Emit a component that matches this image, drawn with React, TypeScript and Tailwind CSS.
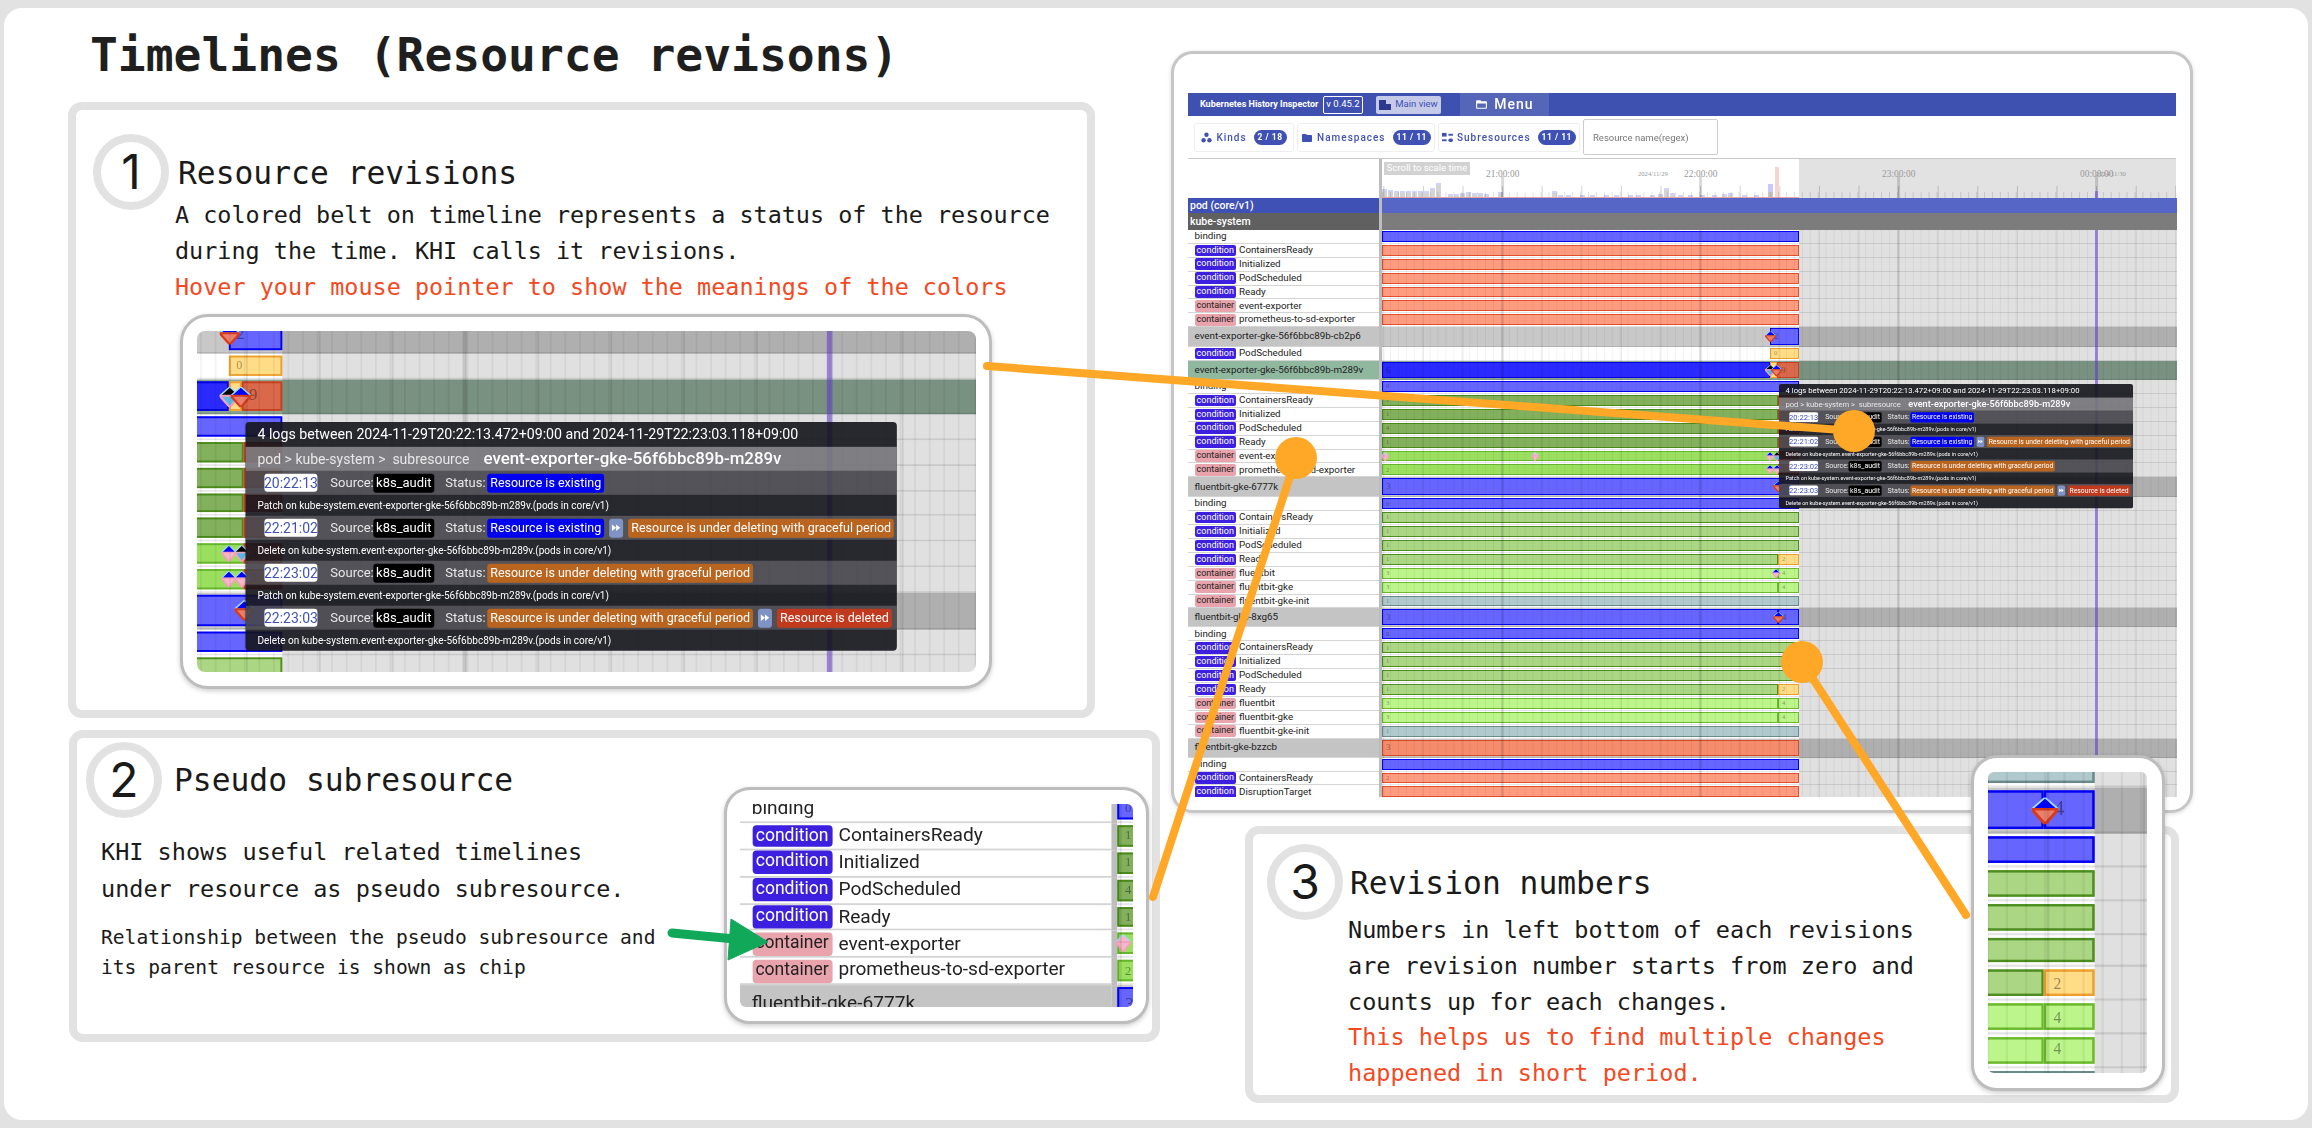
type BarColor = 'blue' | 'deep' | 'salmon' | 'salmonDark' | 'olive' | 'green' | 'lime' | 'pale' | 'teal' | 'yellow' | 'rust';

interface Bar {
  l: number;
  w: number;
  c: BarColor;
  n?: string;
}

interface Mark {
  x: number;
  tip: string;
  body: string;
}

interface Row {
  type: 'res' | 'sub' | 'selected';
  chip?: 'condition' | 'container';
  label: string;
  bars: Bar[];
  marks?: Mark[];
}

const barColors: Record<BarColor, string> = {
  blue: 'bg-[#6666ff] border-[#0000f5]',
  deep: 'bg-[#2a2aff] border-[#0000dd]',
  salmon: 'bg-[#ff9c80] border-[#e0502e]',
  salmonDark: 'bg-[#f58c6c] border-[#d8482a]',
  olive: 'bg-[#83b05c] border-[#4a8a1c]',
  green: 'bg-[#abd684] border-[#4e8e20]',
  lime: 'bg-[#9ae05e] border-[#66b52e]',
  pale: 'bg-[#bcf58a] border-[#6cb82e]',
  teal: 'bg-[#b0c9cc] border-[#6a8a8a]',
  yellow: 'bg-[#ffdc85] border-[#eea02e]',
  rust: 'bg-[#d9694a] border-[#c84020]',
};

const END = 417;
const SPLIT = 396;

const full = (c: BarColor, n: string): Bar[] => [{ l: 0, w: END, c, n }];
const split = (a: BarColor, b: BarColor, n1: string, n2: string): Bar[] => [
  { l: 0, w: SPLIT, c: a, n: n1 },
  { l: SPLIT, w: END - SPLIT, c: b, n: n2 },
];

const red: Mark = { x: 388, tip: '#0000ff', body: '#e8806c' };
const pink: Mark = { x: 3, tip: '#f4b8c8', body: '#f4b8c8' };
const pinkBlue = (x: number): Mark => ({ x, tip: '#0000ff', body: '#f4b8c8' });
const skyBlack = (x: number): Mark => ({ x, tip: '#000000', body: '#58b8e8' });

const sub = (chip: 'condition' | 'container', label: string, bars: Bar[], marks?: Mark[]): Row => ({
  type: 'sub',
  chip,
  label,
  bars,
  marks,
});

const rows: Row[] = [
  { type: 'sub', label: 'binding', bars: full('blue', '') },
  sub('condition', 'ContainersReady', full('salmon', '')),
  sub('condition', 'Initialized', full('salmon', '')),
  sub('condition', 'PodScheduled', full('salmon', '')),
  sub('condition', 'Ready', full('salmon', '')),
  sub('container', 'event-exporter', full('salmon', '')),
  sub('container', 'prometheus-to-sd-exporter', full('salmon', '')),
  { type: 'res', label: 'event-exporter-gke-56f6bbc89b-cb2p6', bars: [{ l: 388, w: 29, c: 'blue', n: '2' }], marks: [red] },
  sub('condition', 'PodScheduled', [{ l: 388, w: 29, c: 'yellow', n: '0' }]),
  {
    type: 'selected',
    label: 'event-exporter-gke-56f6bbc89b-m289v',
    bars: [
      { l: 0, w: 388, c: 'deep', n: '6' },
      { l: 388, w: 7, c: 'yellow' },
      { l: 395, w: 22, c: 'rust', n: '9' },
    ],
    marks: [skyBlack(388), { x: 394, tip: '#0000ff', body: '#e8806c' }],
  },
  { type: 'sub', label: 'binding', bars: full('blue', '0') },
  sub('condition', 'ContainersReady', split('olive', 'rust', '1', '')),
  sub('condition', 'Initialized', split('olive', 'rust', '1', '')),
  sub('condition', 'PodScheduled', split('olive', 'rust', '4', '')),
  sub('condition', 'Ready', split('olive', 'rust', '1', '')),
  sub('container', 'event-exporter', split('lime', 'rust', '', '4'), [pink, { ...pink, x: 153 }, pinkBlue(388), skyBlack(395)]),
  sub('container', 'prometheus-to-sd-exporter', split('lime', 'rust', '2', '5'), [pinkBlue(388), pinkBlue(395)]),
  { type: 'res', label: 'fluentbit-gke-6777k', bars: full('blue', '3'), marks: [{ x: 396, tip: '#0000ff', body: '#e8806c' }] },
  { type: 'sub', label: 'binding', bars: full('blue', '0') },
  sub('condition', 'ContainersReady', full('green', '1')),
  sub('condition', 'Initialized', full('green', '1')),
  sub('condition', 'PodScheduled', full('green', '1')),
  sub('condition', 'Ready', split('green', 'yellow', '1', '2')),
  sub('container', 'fluentbit', split('pale', 'pale', '3', '4'), [pinkBlue(394)]),
  sub('container', 'fluentbit-gke', split('pale', 'pale', '3', '4')),
  sub('container', 'fluentbit-gke-init', full('teal', '1')),
  { type: 'res', label: 'fluentbit-gke-8xg65', bars: split('blue', 'blue', '3', '4'), marks: [{ x: 396, tip: '#0000ff', body: '#e8806c' }] },
  { type: 'sub', label: 'binding', bars: full('blue', '0') },
  sub('condition', 'ContainersReady', full('green', '1')),
  sub('condition', 'Initialized', full('green', '1')),
  sub('condition', 'PodScheduled', full('green', '1')),
  sub('condition', 'Ready', split('green', 'yellow', '1', '2')),
  sub('container', 'fluentbit', split('pale', 'pale', '3', '4')),
  sub('container', 'fluentbit-gke', split('pale', 'pale', '3', '4')),
  sub('container', 'fluentbit-gke-init', full('teal', '1')),
  { type: 'res', label: 'fluentbit-gke-bzzcb', bars: full('salmonDark', '3') },
  { type: 'sub', label: 'binding', bars: full('blue', '') },
  sub('condition', 'ContainersReady', full('salmon', '2')),
  sub('condition', 'DisruptionTarget', full('salmon', '')),
];

function Diamond({ mark, big }: { mark: Mark; big: boolean }) {
  const size = big ? 'top-[4px] h-[11px] w-[11px]' : 'top-[2px] h-[9px] w-[8px]';
  return (
    <svg viewBox="0 0 12 16" preserveAspectRatio="none" className={`absolute z-[5] ${size}`} style={{ left: mark.x - (big ? 5.5 : 4) }}>
      <polygon points="6,0 12,7 0,7" fill={mark.tip} stroke="#9fdcff" strokeWidth="1" />
      <polygon points="0,7 12,7 6,16" fill={mark.body} stroke={mark.body === '#e8806c' ? '#d83a1c' : '#f4a0b8'} strokeWidth="1.5" />
    </svg>
  );
}

function TimelineRow({ row, labels }: { row: Row; labels: boolean }) {
  const isRes = row.type !== 'sub';
  const short = row.label.endsWith('8xg65') || row.label.endsWith('bzzcb') || row.label.endsWith('m289v');
  const leftBg = row.type === 'res' ? 'bg-[#c4c4c4]' : row.type === 'selected' ? 'bg-[#8fb89f]' : 'bg-white';
  const trackBg = row.type === 'res' ? 'bg-[#c8c8c8]' : row.type === 'selected' ? 'bg-[#8aa593]' : 'bg-white';
  return (
    <div className={`flex ${isRes ? (short ? 'h-[19px]' : 'h-[20px]') : 'h-[13.9px]'}`}>
      <div className={`w-[191px] shrink-0 flex items-center gap-[3px] pl-[6.5px] border-b border-[#d4d4d4] text-[9.8px] text-[#222] whitespace-nowrap ${leftBg}`}>
        {labels && row.chip === 'condition' && (
          <span className="w-[41.5px] h-[11.5px] flex items-center justify-center rounded-[2px] bg-[#3d1fe0] text-white text-[9px]">condition</span>
        )}
        {labels && row.chip === 'container' && (
          <span className="w-[41.5px] h-[11.5px] flex items-center justify-center rounded-[2px] bg-[#e8a3ac] text-[#222] text-[9px]">container</span>
        )}
        {labels && <span>{row.label}</span>}
      </div>
      <div className="w-[3px] shrink-0 bg-[#bdbdbd]" />
      <div className={`relative flex-1 border-b border-black/10 ${trackBg}`}>
        {row.bars.map((b, i) => (
          <div
            key={i}
            className={`absolute top-[1px] bottom-[1px] border flex items-center pl-[3px] font-['Liberation_Serif',serif] leading-none text-black/40 ${isRes ? 'text-[9px]' : 'text-[6.5px]'} ${barColors[b.c]}`}
            style={{ left: b.l, width: b.w }}
          >
            {b.n}
          </div>
        ))}
        {row.marks?.map((m, i) => (
          <Diamond key={i} mark={m} big={isRes} />
        ))}
      </div>
    </div>
  );
}

// Grid lines over the whole track
function GridLines() {
  const minor = Array.from({ length: 100 }, (_, i) => 0.6 + i * 7.92);
  const medium = Array.from({ length: 21 }, (_, i) => 1.8 + i * 39.6);
  const major = [120.6, 318.6, 516.6, 714.6];
  return (
    <svg width="795" height="599" className="absolute left-[194px] top-0 z-10">
      {minor.map((x) => (
        <line key={x} x1={x} x2={x} y1="0" y2="599" stroke="#000" strokeOpacity="0.05" />
      ))}
      {medium.map((x) => (
        <line key={x} x1={x} x2={x} y1="0" y2="599" stroke="#000" strokeOpacity="0.09" />
      ))}
      {major.map((x) => (
        <line key={x} x1={x} x2={x} y1="0" y2="599" stroke="#000" strokeOpacity="0.07" strokeWidth="3" />
      ))}
    </svg>
  );
}

function ForwardIcon() {
  return (
    <span className="w-[14px] h-[19px] flex items-center justify-center rounded-[3px] bg-[#7f93c4]">
      <svg viewBox="0 0 12 12" className="w-[10px] h-[10px]">
        <polygon points="1,2 6,6 1,10" fill="#fff" />
        <polygon points="6,2 11,6 6,10" fill="#fff" />
      </svg>
    </span>
  );
}

function StatusChip({ color, text }: { color: 'blue' | 'orange' | 'red'; text: string }) {
  const cls = color === 'blue' ? 'bg-[#0000f0]' : color === 'orange' ? 'bg-[#b9651f]' : 'bg-[#c23a1e]';
  return <span className={`h-[19px] px-[3px] flex items-center rounded-[3px] text-white text-[12.5px] ${cls}`}>{text}</span>;
}

const logEntries = [
  { time: '20:22:13', msg: 'Patch on kube-system.event-exporter-gke-56f6bbc89b-m289v.(pods in core/v1)', from: 'blue' as const, to: undefined },
  { time: '22:21:02', msg: 'Delete on kube-system.event-exporter-gke-56f6bbc89b-m289v.(pods in core/v1)', from: 'blue' as const, to: 'orange' as const },
  { time: '22:23:02', msg: 'Patch on kube-system.event-exporter-gke-56f6bbc89b-m289v.(pods in core/v1)', from: 'orange' as const, to: undefined },
  { time: '22:23:03', msg: 'Delete on kube-system.event-exporter-gke-56f6bbc89b-m289v.(pods in core/v1)', from: 'orange' as const, to: 'red' as const },
];

const statusText = {
  blue: 'Resource is existing',
  orange: 'Resource is under deleting with graceful period',
  red: 'Resource is deleted',
};

function LogTooltip() {
  return (
    <div className="w-[652px] rounded-[4px] overflow-hidden bg-[#14141c]/90 text-[#e8e8e8] font-['Roboto',sans-serif]">
      <div className="h-[25px] flex items-center pl-[12px] text-[14.2px] text-white whitespace-nowrap">
        4 logs between 2024-11-29T20:22:13.472+09:00 and 2024-11-29T22:23:03.118+09:00
      </div>
      <div className="h-[24px] flex items-center pl-[12px] gap-[14px] bg-white/40 text-[14px] whitespace-nowrap">
        <span>pod &gt; kube-system &gt;&nbsp; subresource</span>
        <span className="text-[16.9px] font-medium text-white">event-exporter-gke-56f6bbc89b-m289v</span>
      </div>
      {logEntries.map((e) => (
        <div key={e.time}>
          <div className="h-[24px] flex items-center bg-white/20 text-[13px] whitespace-nowrap">
            <span className="ml-[19px] w-[53px] h-[18px] flex items-center justify-center rounded-[3px] bg-white text-[#3f51b5] text-[14px]">{e.time}</span>
            <span className="ml-[13px] w-[43px]">Source:</span>
            <span className="w-[61px] h-[19px] flex items-center justify-center rounded-[3px] bg-black text-white">k8s_audit</span>
            <span className="ml-[11px] w-[42px]">Status:</span>
            <span className="flex items-center gap-[5px]">
              <StatusChip color={e.from} text={statusText[e.from]} />
              {e.to && <ForwardIcon />}
              {e.to && <StatusChip color={e.to} text={statusText[e.to]} />}
            </span>
          </div>
          <div className="h-[21px] flex items-center pl-[12px] text-[10px] text-white whitespace-nowrap">{e.msg}</div>
        </div>
      ))}
    </div>
  );
}

// The row area of the tool; the cards further down show zoomed crops of it
function TimelineBody({ from = 0, to = rows.length, labels = true, tooltipTop }: { from?: number; to?: number; labels?: boolean; tooltipTop?: number }) {
  return (
    <div className="relative w-[989px] h-[599px] overflow-hidden font-['Roboto',sans-serif]">
      {from === 0 && (
        <>
          <div className="relative z-20 flex h-[15px]">
            <div className="w-[191px] shrink-0 pl-[2px] flex items-center bg-[#3f51b5] text-white text-[10.5px] font-medium">pod (core/v1)</div>
            <div className="w-[3px] shrink-0 bg-[#bdbdbd]" />
            <div className="flex-1 bg-[#5566c6]" />
          </div>
          <div className="relative z-20 flex h-[17px]">
            <div className="w-[191px] shrink-0 pl-[2px] flex items-center bg-[#606060] text-white text-[10.5px] font-medium">kube-system</div>
            <div className="w-[3px] shrink-0 bg-[#bdbdbd]" />
            <div className="flex-1 bg-[#7c7c7c]" />
          </div>
        </>
      )}
      {rows.slice(from, to).map((r, i) => (
        <TimelineRow key={i} row={r} labels={labels} />
      ))}
      <GridLines />
      <div className="absolute left-[611px] right-0 top-0 bottom-0 z-10 bg-black/12" />
      <div className="absolute left-[907px] w-[3px] top-0 bottom-0 z-10 bg-[#6a3fe0]/50" />
      {tooltipTop !== undefined && (
        <div className="absolute left-[591px] z-30 origin-top-left scale-[0.543]" style={{ top: tooltipTop }}>
          <LogTooltip />
        </div>
      )}
    </div>
  );
}

const histogram = [
  [0, 9], [6, 8], [12, 7], [18, 7], [24, 7], [30, 7], [36, 7], [42, 7], [48, 10], [54, 15], [66, 4], [72, 4], [78, 5], [84, 6], [90, 5], [96, 5], [102, 4], [116, 6],
  [170, 7], [176, 3], [184, 3], [198, 3], [208, 3], [222, 3], [232, 3], [246, 3], [254, 3], [268, 3], [276, 4], [282, 10], [288, 5], [296, 3], [306, 3], [318, 3], [330, 3], [340, 4], [346, 5], [360, 3], [372, 3],
];

function TimeHeader() {
  const minor = Array.from({ length: 100 }, (_, i) => 0.6 + i * 7.92);
  const medium = Array.from({ length: 21 }, (_, i) => 1.8 + i * 39.6);
  const major = [120.6, 318.6, 516.6, 714.6];
  return (
    <div className="flex h-[39px] font-['Liberation_Serif',serif] text-[#999]">
      <div className="w-[191px] shrink-0 bg-white" />
      <div className="w-[3px] shrink-0 bg-[#bdbdbd]" />
      <div className="relative flex-1 bg-white overflow-hidden">
        <div className="absolute left-[417px] right-0 inset-y-0 bg-[#e2e2e2]" />
        <svg width="795" height="39" className="absolute left-0 top-0">
          {histogram.map(([x, h]) => (
            <g key={x}>
              <rect x={x} y={39 - h} width="5" height={h} fill="#d4d4d4" />
              <rect x={x} y={39 - h} width="5" height={Math.min(h, 2)} fill="#d0d4f8" />
            </g>
          ))}
          <rect x="386" y="25" width="5" height="14" fill="#c4c4c4" />
          <rect x="386" y="25" width="5" height="8" fill="#c8c8ff" />
          <rect x="393" y="8" width="4" height="31" fill="#f7d4d0" />
          {minor.map((x) => (
            <line key={x} x1={x} x2={x} y1="33" y2="39" stroke="#000" strokeOpacity="0.12" />
          ))}
          {medium.map((x) => (
            <line key={x} x1={x} x2={x} y1="27" y2="39" stroke="#000" strokeOpacity="0.18" />
          ))}
          {major.map((x) => (
            <line key={x} x1={x} x2={x} y1="17" y2="39" stroke="#000" strokeOpacity="0.15" strokeWidth="3" />
          ))}
          <line x1="0" x2="417" y1="38.5" y2="38.5" stroke="#e8a0a0" />
          <rect x="713" y="32" width="3" height="7" fill="#6a3fe0" fillOpacity="0.5" />
        </svg>
        <div className="absolute left-[2px] top-[3px] w-[86px] h-[13px] flex items-center justify-center bg-[#d2d2d2] text-white text-[9.5px] font-['Roboto',sans-serif]">Scroll to scale time</div>
        <span className="absolute left-[104px] top-[8px] text-[9.4px]">21:00:00</span>
        <span className="absolute left-[302px] top-[8px] text-[9.4px]">22:00:00</span>
        <span className="absolute left-[500px] top-[8px] text-[9.4px]">23:00:00</span>
        <span className="absolute left-[698px] top-[8px] text-[9.4px]">00:00:00</span>
        <span className="absolute left-[256px] top-[10px] text-[6.6px]">2024/11/29</span>
        <span className="absolute left-[714px] top-[10px] text-[6.6px]">2024/11/30</span>
      </div>
    </div>
  );
}

function FilterChip({ icon, name, count, width }: { icon: React.ReactNode; name: string; count: string; width: string }) {
  return (
    <div className={`h-[29px] flex items-center justify-center gap-[7px] rounded-[3px] border border-[#eeeeee] ${width}`}>
      <span className="flex items-center gap-[4px] text-[#3f51b5] text-[10px] font-medium tracking-[1px]">
        {icon}
        {name}
      </span>
      <span className="h-[15px] px-[4px] flex items-center rounded-full bg-[#3f51b5] text-white text-[8.5px] font-bold tracking-[0.5px]">{count}</span>
    </div>
  );
}

function MainCard() {
  return (
    <div className="absolute left-[1171px] top-[51px] w-[1022px] h-[762px] rounded-[22px] border-[3px] border-[#c6c6c6] bg-white shadow-[0_1px_4px_rgba(0,0,0,0.15)] px-[14px] pt-[39px]">
      <div className="blur-[0.4px] font-['Roboto',sans-serif]">
        <div className="flex items-center h-[23px] bg-[#3f51b0] text-white">
          <span className="ml-[12px] w-[116px] text-[9px] font-bold whitespace-nowrap">Kubernetes History Inspector</span>
          <span className="ml-[7px] w-[40px] h-[18px] flex items-center justify-center rounded-[2px] border border-white text-[9.5px]">v 0.45.2</span>
          <span className="ml-[13px] w-[65px] h-[18px] flex items-center justify-center gap-[4px] rounded-[2px] bg-[#c5cae9] text-[#3f51b5] text-[9.5px]">
            <svg viewBox="0 0 12 12" className="w-[12px] h-[12px]">
              <path d="M0 1h12v10H0z" fill="#2b3a8c" />
              <path d="M7 1h5v4H7z" fill="#c5cae9" />
            </svg>
            Main view
          </span>
          <span className="ml-[19px] w-[89px] h-[23px] flex items-center justify-center gap-[6px] bg-[#5566b8] text-[14px] font-medium tracking-[1px]">
            <svg viewBox="0 0 24 24" className="w-[13px] h-[13px]" fill="#fff">
              <path d="M20 6h-8l-2-2H4c-1.1 0-2 .9-2 2v12c0 1.1.9 2 2 2h16c1.1 0 2-.9 2-2V8c0-1.1-.9-2-2-2zm0 12H4V10h16v8z" />
            </svg>
            Menu
          </span>
        </div>
        <div className="flex items-start gap-[3px] h-[43px] pl-[6px] border-b border-[#c8c8c8]">
          <div className="mt-[7px] flex gap-[3px]">
            <FilterChip
              name="Kinds"
              count="2 / 18"
              width="w-[100px]"
              icon={
                <svg viewBox="0 0 12 12" className="w-[11px] h-[11px]" fill="#3f51b5">
                  <circle cx="6" cy="3" r="2.4" />
                  <circle cx="2.8" cy="9" r="2.4" />
                  <circle cx="9.2" cy="9" r="2.4" />
                </svg>
              }
            />
            <FilterChip
              name="Namespaces"
              count="11 / 11"
              width="w-[138px]"
              icon={
                <svg viewBox="0 0 24 24" className="w-[12px] h-[12px]" fill="#3f51b5">
                  <path d="M10 4H4c-1.1 0-2 .9-2 2v12c0 1.1.9 2 2 2h16c1.1 0 2-.9 2-2V8c0-1.1-.9-2-2-2h-8l-2-2z" />
                </svg>
              }
            />
            <FilterChip
              name="Subresources"
              count="11 / 11"
              width="w-[142px]"
              icon={
                <svg viewBox="0 0 12 12" className="w-[11px] h-[11px]" fill="#3f51b5">
                  <rect x="0" y="1" width="5" height="4" />
                  <rect x="7" y="2" width="5" height="2" />
                  <rect x="0" y="8" width="5" height="2" />
                  <rect x="7" y="7" width="5" height="4" rx="2" />
                </svg>
              }
            />
          </div>
          <div className="mt-[3px] w-[135px] h-[36px] flex items-center pl-[9px] pt-[2px] rounded-[2px] border border-[#cccccc] text-[#777] text-[9.5px]">Resource name(regex)</div>
        </div>
        <TimeHeader />
        <TimelineBody tooltipTop={186} />
      </div>
    </div>
  );
}

function NumberCircle({ n }: { n: string }) {
  return (
    <div className="w-[76px] h-[76px] shrink-0 rounded-full border-[8px] border-[#e2e2e2] flex items-center justify-center font-['Inter',sans-serif] text-[48px] text-[#1a1a1a]">
      {n}
    </div>
  );
}

const monoFont = "font-['DejaVu_Sans_Mono','Liberation_Mono',monospace]";

export default function App() {
  return (
    <div className={`relative w-[2312px] h-[1128px] overflow-hidden bg-[#e2e2e2] ${monoFont}`}>
      <div className="absolute left-[4px] right-[4px] top-[8px] bottom-[8px] rounded-[18px] bg-white" />
      <h1 className="absolute left-[90px] top-[27px] text-[46.3px] leading-[56px] font-bold text-[#1f1f1f] whitespace-nowrap">Timelines (Resource revisons)</h1>

      <MainCard />

      {/* 1 */}
      <section className="absolute left-[68px] top-[102px] w-[1027px] h-[616px] rounded-[14px] border-[8px] border-[#e2e2e2] bg-white pl-[17px] pt-[24px] text-[#1a1a1a]">
        <div className="flex items-center gap-[9px]">
          <NumberCircle n="1" />
          <h2 className="text-[31.3px] leading-[40px] mt-[2px]">Resource revisions</h2>
        </div>
        <div className="-mt-[13px] ml-[82px] text-[23.45px] leading-[36.2px] whitespace-nowrap">
          <p>A colored belt on timeline represents a status of the resource</p>
          <p>during the time. KHI calls it revisions.</p>
          <p className="text-[#f4491f]">Hover your mouse pointer to show the meanings of the colors</p>
        </div>
        <div className="mt-[8px] ml-[87px] w-[812px] h-[375px] rounded-[28px] border-[3px] border-[#bdbdbd] bg-white shadow-[0_2px_5px_rgba(0,0,0,0.2)] p-[14px]">
          <div className="relative w-[779px] h-[341px] rounded-[8px] overflow-hidden bg-white blur-[0.5px]">
            <div className="absolute left-[-1039px] top-[-14px] origin-top-left scale-[1.84]">
              <TimelineBody from={7} to={20} labels={false} tooltipTop={56.7} />
            </div>
          </div>
        </div>
      </section>

      {/* 2 */}
      <section className="absolute left-[69px] top-[730px] w-[1091px] h-[312px] rounded-[14px] border-[8px] border-[#e2e2e2] bg-white text-[#1a1a1a] flex">
        <div className="pl-[9px] pt-[4px] w-[647px] shrink-0">
          <div className="flex items-center gap-[12px]">
            <NumberCircle n="2" />
            <h2 className="text-[31.3px] leading-[40px]">Pseudo subresource</h2>
          </div>
          <div className="mt-[16px] ml-[15px] text-[23.5px] leading-[37px] whitespace-nowrap">
            <p>KHI shows useful related timelines</p>
            <p>under resource as pseudo subresource.</p>
          </div>
          <div className="mt-[15px] ml-[15px] text-[19.6px] leading-[30px] whitespace-nowrap">
            <p>Relationship between the pseudo subresource and</p>
            <p>its parent resource is shown as chip</p>
          </div>
        </div>
        <div className="mt-[49px] w-[425px] h-[237px] rounded-[26px] border-[3px] border-[#bdbdbd] bg-white shadow-[0_2px_5px_rgba(0,0,0,0.2)] px-[13px] pt-[14px]">
          <div className="relative w-[393px] h-[203px] rounded-[6px] overflow-hidden blur-[0.3px]">
            <div className="absolute left-[-1.5px] top-[-8px] origin-top-left scale-[1.95]">
              <TimelineBody from={10} to={18} />
            </div>
          </div>
        </div>
      </section>

      {/* 3 */}
      <section className="absolute left-[1245px] top-[826px] w-[934px] h-[277px] rounded-[14px] border-[8px] border-[#e2e2e2] bg-white text-[#1a1a1a] flex">
        <div className="pl-[14px] pt-[10px] w-[718px] shrink-0">
          <div className="flex items-center gap-[7px]">
            <NumberCircle n="3" />
            <h2 className="text-[31.3px] leading-[40px] mt-[2px]">Revision numbers</h2>
          </div>
          <div className="-mt-[7px] ml-[81px] text-[23.5px] leading-[35.8px] whitespace-nowrap">
            <p>Numbers in left bottom of each revisions</p>
            <p>are revision number starts from zero and</p>
            <p>counts up for each changes.</p>
            <p className="text-[#f4491f]">This helps us to find multiple changes</p>
            <p className="text-[#f4491f]">happened in short period.</p>
          </div>
        </div>
        <div className="-mt-[79px] w-[194px] h-[336px] rounded-[26px] border-[3px] border-[#bdbdbd] bg-white shadow-[0_2px_5px_rgba(0,0,0,0.2)] pl-[14px] pt-[14px]">
          <div className="relative w-[159px] h-[301px] rounded-[6px] overflow-hidden blur-[0.3px]">
            <div className="absolute left-[-1372px] top-[-18px] origin-top-left scale-[2.42]">
              <TimelineBody from={25} to={35} labels={false} />
            </div>
          </div>
        </div>
      </section>

      {/* connectors */}
      <svg width="2312" height="1128" className="absolute left-0 top-0 pointer-events-none">
        <line x1="987" y1="366" x2="1854" y2="431" stroke="#ffa726" strokeWidth="8" strokeLinecap="round" />
        <line x1="1296" y1="458" x2="1153" y2="897" stroke="#ffa726" strokeWidth="8" strokeLinecap="round" />
        <line x1="1802" y1="662" x2="1966" y2="915" stroke="#ffa726" strokeWidth="8" strokeLinecap="round" />
        <circle cx="1854" cy="431" r="21" fill="#ffa726" />
        <circle cx="1296" cy="458" r="21" fill="#ffa726" />
        <circle cx="1802" cy="662" r="21" fill="#ffa726" />
        <line x1="672" y1="933" x2="735" y2="939" stroke="#12a85a" strokeWidth="9" strokeLinecap="round" />
        <polygon points="731,919 768,942 728,960" fill="#12a85a" stroke="#12a85a" strokeLinejoin="round" />
      </svg>
    </div>
  );
}
